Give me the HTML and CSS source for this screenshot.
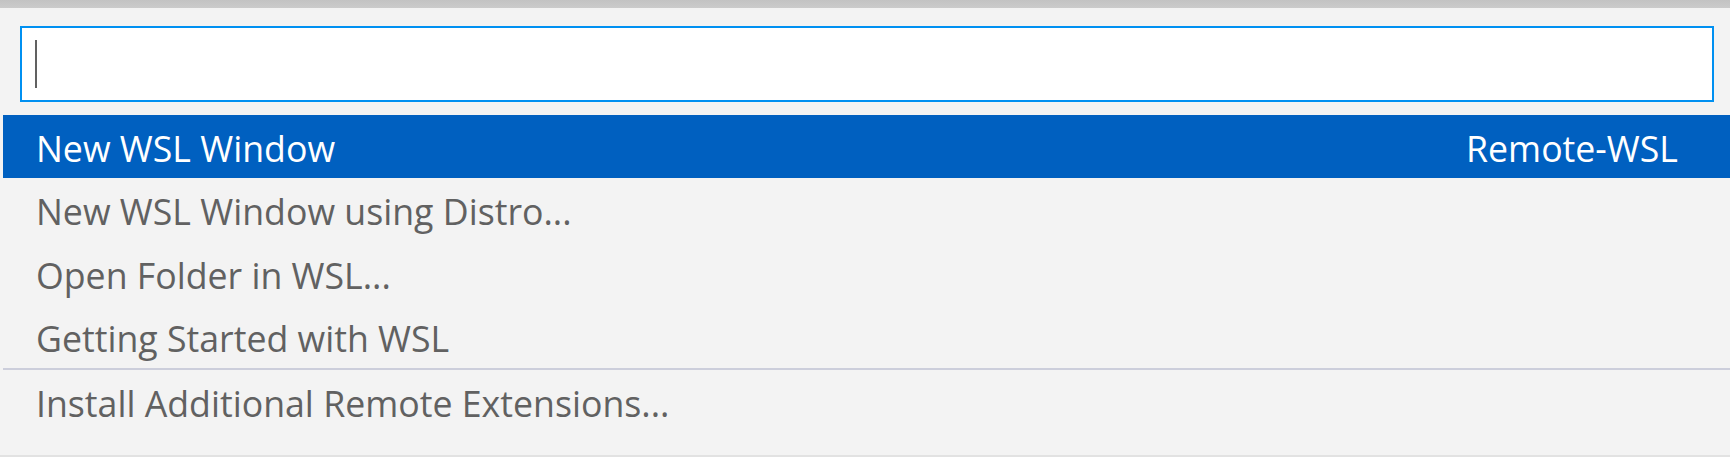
FILE: index.html
```html
<!DOCTYPE html>
<html lang="en">
<head>
<meta charset="utf-8">
<title>Quick Pick</title>
<link rel="stylesheet" href="styles.css">
</head>
<body>
<div class="topbar"></div>
<div class="quick">
  <div class="input">
    <span class="caret"></span>
  </div>
  <ul class="list">
    <li class="row selected"><span class="label">New WSL Window</span><span class="detail">Remote-WSL</span></li>
    <li class="row"><span class="label">New WSL Window using Distro...</span></li>
    <li class="row"><span class="label">Open Folder in WSL...</span></li>
    <li class="row"><span class="label">Getting Started with WSL</span></li>
    <li class="row separated"><span class="label">Install Additional Remote Extensions...</span></li>
  </ul>
</div>
<div class="bottom-line"></div>
</body>
</html>
```
FILE: styles.css
```css
html, body {
  margin: 0;
  padding: 0;
}
body {
  width: 1730px;
  height: 457px;
  overflow: hidden;
  background: #f3f3f3;
  font-family: "Open Sans", "Noto Sans", sans-serif;
  font-size: 35.7px;
  color: #616161;
  display: flex;
  flex-direction: column;
}
.topbar {
  height: 8px;
  flex: none;
  background: linear-gradient(#c3c3c3, #cbcbcb);
}
.quick {
  flex: 1;
  padding-top: 18px;
  display: flex;
  flex-direction: column;
}
.input {
  margin: 0 16px 0 20px;
  height: 76px;
  box-sizing: border-box;
  border: 2px solid #0090f1;
  background: #ffffff;
  padding: 12px 13px;
  display: flex;
}
.caret {
  width: 2px;
  height: 48px;
  background: #616161;
}
.list {
  list-style: none;
  margin: 13px 0 0 3px;
  padding: 0;
}
.row {
  height: 63.25px;
  box-sizing: border-box;
  padding: 3px 52px 0 33px;
  line-height: 60.25px;
  display: flex;
  justify-content: space-between;
  white-space: nowrap;
}
.row.selected {
  background: #0060c0;
  color: #ffffff;
}
.row.separated {
  height: 65.25px;
  border-top: 2px solid #cccedb;
}
.bottom-line {
  height: 2px;
  flex: none;
  background: #e2e2e2;
}
```
